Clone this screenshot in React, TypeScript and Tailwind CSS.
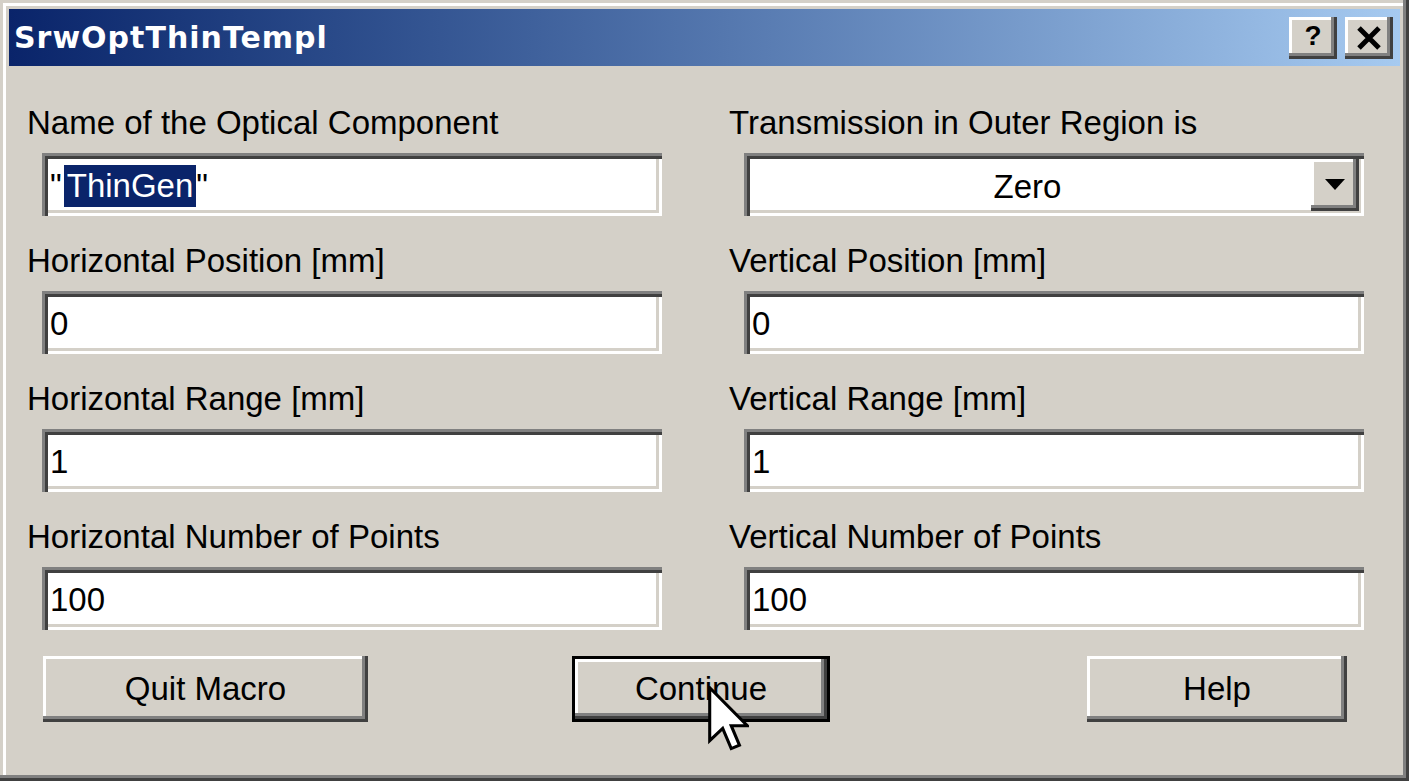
import React from 'react';

const sunken =
  'shadow-[inset_3px_3px_0_#808080,inset_6px_6px_0_#404040,inset_-3px_-3px_0_#ffffff,inset_-6px_-6px_0_#d4d0c8]';
const raised =
  'shadow-[inset_-3px_-3px_0_#404040,inset_-6px_-6px_0_#808080,inset_3px_3px_0_#ffffff]';

function Field({ label, value }: { label: string; value: string }) {
  return (
    <div className="flex flex-col">
      <div className="h-[40px] flex items-center text-[33px] leading-none">{label}</div>
      <div className={`mt-[11px] ml-[15px] w-[620px] h-[63px] bg-white flex items-center pl-[8px] pt-[2px] text-[33px] ${sunken}`}>
        {value}
      </div>
    </div>
  );
}

function Btn({ label, width, isDefault }: { label: string; width: string; isDefault?: boolean }) {
  return (
    <div
      className={`${width} h-[66px] bg-[#d4d0c8] flex items-center justify-center text-[33px] ${
        isDefault ? 'border-[3px] border-black ' + raised : raised
      }`}
    >
      {label}
    </div>
  );
}

export default function App() {
  return (
    <div
      className="relative w-[1409px] h-[781px] bg-[#d4d0c8] p-[9px] text-black overflow-hidden shadow-[inset_-3px_-3px_0_#404040,inset_-6px_-6px_0_#808080,inset_3px_3px_0_#d4d0c8,inset_6px_6px_0_#ffffff]"
      style={{ fontFamily: '"Liberation Sans", Arial, sans-serif' }}
    >
      {/* Title bar */}
      <div className="h-[57px] flex items-center justify-between pl-[5px] pr-[7px] bg-gradient-to-r from-[#0a246a] to-[#a6caf0]">
        <span
          className="text-white font-bold text-[30px] tracking-[1px]"
          style={{ fontFamily: '"DejaVu Sans", Verdana, sans-serif' }}
        >
          SrwOptThinTempl
        </span>
        <div className="flex gap-[8px]">
          <div className={`w-[48px] h-[42px] bg-[#d4d0c8] flex items-center justify-center font-bold text-[28px] pb-[3px] ${raised}`}>
            ?
          </div>
          <div className={`w-[48px] h-[42px] bg-[#d4d0c8] flex items-center justify-center ${raised}`}>
            <svg width="26" height="24" viewBox="0 0 26 24">
              <path d="M3 2 L23 22 M23 2 L3 22" stroke="#000" strokeWidth="5" />
            </svg>
          </div>
        </div>
      </div>

      {/* Form */}
      <div className="pt-[36px] pl-[18px] grid grid-cols-[635px_636px] gap-x-[67px] gap-y-[24px]">
        <div className="flex flex-col">
          <div className="h-[40px] flex items-center text-[33px] leading-none">Name of the Optical Component</div>
          <div className={`mt-[11px] ml-[15px] w-[620px] h-[63px] bg-white flex items-center pl-[8px] pt-[2px] text-[33px] ${sunken}`}>
            <span className="tracking-[2px]">"</span>
            <span className="bg-[#0a246a] text-white px-[3px] leading-[42px]">ThinGen</span>
            <span>"</span>
          </div>
        </div>
        <div className="flex flex-col">
          <div className="h-[40px] flex items-center text-[33px] leading-none">Transmission in Outer Region is</div>
          <div className={`mt-[11px] ml-[15px] w-[620px] h-[63px] bg-white flex items-center pr-[5px] text-[33px] ${sunken}`}>
            <span className="flex-1 text-center pt-[4px]">Zero</span>
            <div className={`w-[48px] h-[52px] bg-[#d4d0c8] flex items-center justify-center ${raised}`}>
              <svg width="20" height="12" viewBox="0 0 20 12">
                <path d="M0 0 H20 L10 11 Z" fill="#000" />
              </svg>
            </div>
          </div>
        </div>
        <Field label="Horizontal Position [mm]" value="0" />
        <Field label="Vertical Position [mm]" value="0" />
        <Field label="Horizontal Range [mm]" value="1" />
        <Field label="Vertical Range [mm]" value="1" />
        <Field label="Horizontal Number of Points" value="100" />
        <Field label="Vertical Number of Points" value="100" />
      </div>

      {/* Buttons */}
      <div className="flex mt-[26px] ml-[34px]">
        <Btn label="Quit Macro" width="w-[325px]" />
        <div className="ml-[204px]">
          <Btn label="Continue" width="w-[258px]" isDefault />
        </div>
        <div className="ml-[257px]">
          <Btn label="Help" width="w-[260px]" />
        </div>
      </div>

      {/* Mouse pointer */}
      <svg className="absolute left-[708px] top-[686px]" width="41" height="65" viewBox="0 0 12 19">
        <path
          d="M0.5 0.5 V16 L4.3 12.4 L6.8 18.3 L9.2 17.3 L6.8 11.6 H11.5 Z"
          fill="#fff"
          stroke="#000"
          strokeWidth="0.9"
          strokeLinejoin="miter"
        />
      </svg>
    </div>
  );
}
